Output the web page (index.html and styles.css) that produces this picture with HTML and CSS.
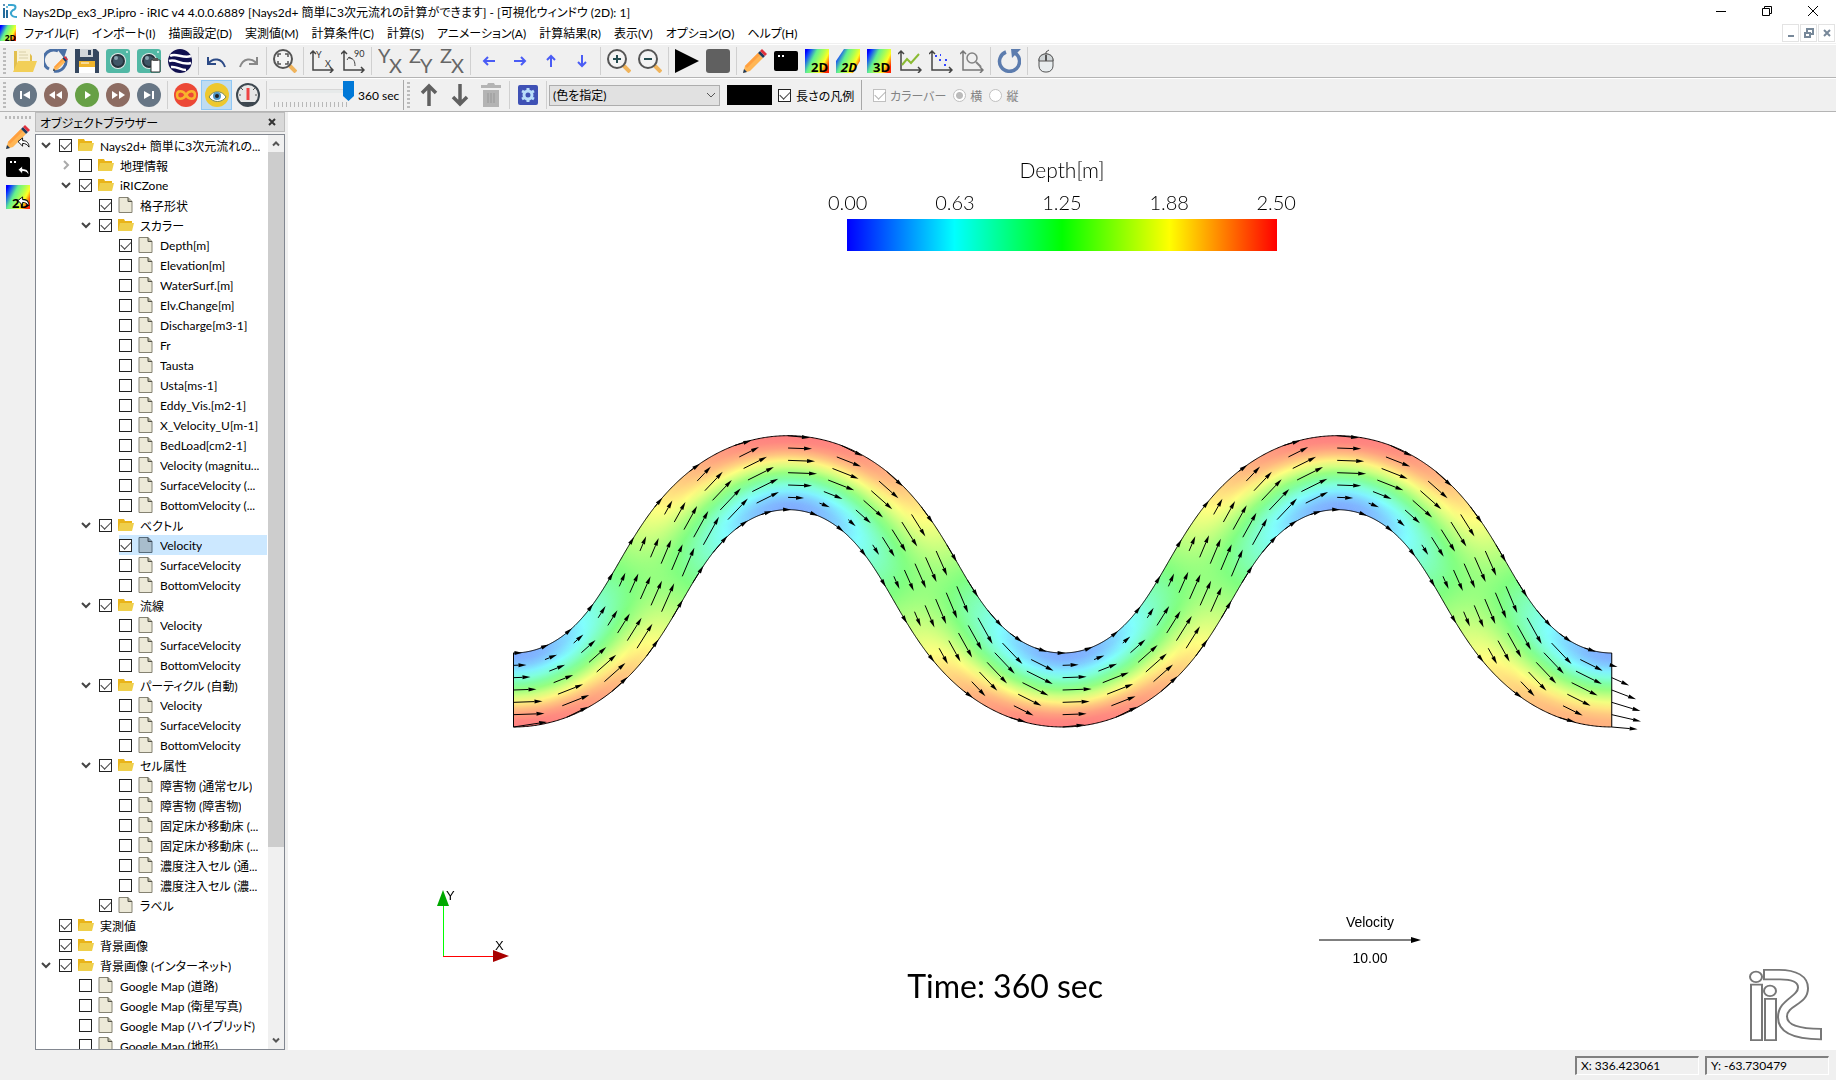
FILE: index.html
```html
<!DOCTYPE html>
<html lang="ja">
<head>
    <meta charset="UTF-8">
    <meta name="viewport" content="width=device-width, initial-scale=1.0">
    <title>Nays2Dp_ex3_JP.ipro - iRIC</title>
    <link rel="stylesheet" href="styles.css">
</head>
<body>
    <svg class="defs" aria-hidden="true">
        <defs>
            <linearGradient id="rainbow" x1="0" y1="0.2" x2="1" y2="0.7">
                <stop offset="0" stop-color="#00f"/>
                <stop offset="0.1" stop-color="#1040ff"/>
                <stop offset="0.35" stop-color="#60f090"/>
                <stop offset="0.6" stop-color="#b0ff50"/>
                <stop offset="0.78" stop-color="#ff2"/>
                <stop offset="1" stop-color="#f20"/>
            </linearGradient>
            <symbol id="folder" viewBox="0 0 16 16">
                <path d="M0 2l6 0 1 2h7v10H0z" fill="#e9b419"/>
                <path d="M2 6h14l-2 8H0z" fill="#efcf4b"/>
            </symbol>
            <symbol id="file" viewBox="0 0 16 16">
                <path d="M1 .5h9l4 4v11H1z" fill="#ece9d8" stroke="#858272"/>
                <path d="M10 .5v4h4" fill="#b8b5a0" stroke="#55544a"/>
            </symbol>
            <symbol id="pencil" viewBox="0 0 24 24">
                <path d="M0 24l2-7 13-13 5 5L7 22z" fill="#ffb655"/>
                <path d="M2 17l13-13 2 2L4 19z" fill="#ffa040"/>
                <path d="M15 4l2-2 5 5-2 2z" fill="#1c3a5e"/>
                <path d="M17 2l2-2 5 5-2 2z" fill="#e0303c"/>
                <path d="M0 24l1-4 3 3z" fill="#1c3a5e"/>
            </symbol>
            <symbol id="lens" viewBox="0 0 24 24">
                <path d="M16 16l7 7" stroke="#f0b45c" stroke-width="4"/>
                <circle cx="10" cy="10" r="9" fill="#f4f4f4" stroke="#555" stroke-width="2"/>
            </symbol>
            <symbol id="axes" viewBox="0 0 24 24">
                <path d="M3 2v19h20M0 5l3-3 3 3M20 18l3 3-3 3" fill="none" stroke="#444" stroke-width="1.500"/>
            </symbol>
            <symbol id="camera" viewBox="0 0 24 24">
                <rect width="24" height="24" rx="3" fill="#52b8a5"/>
                <circle cx="12" cy="12" r="8" fill="#e4ebea"/>
                <circle cx="12" cy="12" r="7" fill="#26323c"/>
                <circle cx="12" cy="12" r="5" fill="#3f5666"/>
                <circle cx="10" cy="9" r="2" fill="#8ba5b2"/>
                <circle cx="21" cy="3" r="1" fill="#d9f4ee"/>
            </symbol>
            <symbol id="reply" viewBox="0 0 14 12">
                <path d="M1 5l5-4v3c5 0 7 3 7 7-2-3-4-4-7-4v3z" fill="#fff" stroke="#000"/>
            </symbol>
        </defs>
    </svg>

    <header class="title-bar">
        <svg class="app-icon" viewBox="0 0 16 16">
            <path d="M2 5v10M5 7v8" stroke="#246c9c" stroke-width="2"/>
            <circle cx="2" cy="2" r="1" fill="#246c9c"/><circle cx="5" cy="4" r="1" fill="#39a5cf"/>
            <path d="M6 2h4c5 0 4 4 1 5-4 3-2 7 4 7" fill="none" stroke="#39a5cf" stroke-width="2"/>
        </svg>
        <h1>Nays2Dp_ex3_JP.ipro - iRIC v4 4.0.0.6889 [Nays2d+ 簡単に3次元流れの計算ができます] - [可視化ウィンドウ (2D): 1]</h1>
        <div class="window-buttons">
            <button type="button" aria-label="Minimize"><svg viewBox="0 0 12 12"><path d="M1 6.5h10"/></svg></button>
            <button type="button" aria-label="Restore"><svg viewBox="0 0 12 12"><path d="M1.500 3.500h7v7h-7zM3.500 3V1.500h7v7H9"/></svg></button>
            <button type="button" aria-label="Close"><svg viewBox="0 0 12 12"><path d="M1 1l10 10M11 1L1 11"/></svg></button>
        </div>
    </header>

    <nav class="menu-bar">
        <svg class="app-icon" viewBox="0 0 24 24"><rect width="24" height="24" fill="url(#rainbow)"/><text class="icon-2d" x="7" y="24">2D</text></svg>
        <button type="button">ファイル(F)</button>
        <button type="button">インポート(I)</button>
        <button type="button">描画設定(D)</button>
        <button type="button">実測値(M)</button>
        <button type="button">計算条件(C)</button>
        <button type="button">計算(S)</button>
        <button type="button">アニメーション(A)</button>
        <button type="button">計算結果(R)</button>
        <button type="button">表示(V)</button>
        <button type="button">オプション(O)</button>
        <button type="button">ヘルプ(H)</button>
        <div class="mdi-buttons">
            <button type="button" aria-label="Minimize view"><svg viewBox="0 0 10 10"><path d="M2 8h6"/></svg></button>
            <button type="button" aria-label="Restore view"><svg viewBox="0 0 10 10"><path d="M1 5h5v4H1zM3 4V1h6v5H7"/></svg></button>
            <button type="button" aria-label="Close view"><svg viewBox="0 0 10 10"><path d="M2 2l6 6M8 2L2 8"/></svg></button>
        </div>
    </nav>

    <div class="toolbar">
        <span class="grip"></span>
        <button type="button" aria-label="Open"><svg viewBox="0 0 24 24"><path d="M1 2h14l4 5v15H1z" fill="#e2bf4e"/><path d="M4 0h13v14H4z" fill="#f8f1d5"/><path d="M6 3h7M6 6h9M6 9h9" stroke="#d8cfa8"/><path d="M0 23l5-11h19l-4 11z" fill="#f2cf58"/></svg></button>
        <button type="button" aria-label="Reload"><svg viewBox="0 0 24 24"><path d="M14 2A10 10 0 0 0 5 20M10 22a10 10 0 0 0 11-14" fill="none" stroke="#4a6fa5" stroke-width="3"/><path d="M13 0h10l-3 9z" fill="#4a6fa5"/><use href="#pencil" x="9" y="6" width="15" height="17"/></svg></button>
        <button type="button" aria-label="Save"><svg viewBox="0 0 24 24"><path d="M0 0h21l3 3v21H0z" fill="#35475f"/><path d="M5 0h13v8H5z" fill="#d2d6da"/><path d="M13 1h3v5h-3z" fill="#35475f"/><path d="M4 12h16v12H4z" fill="#fff"/><path d="M4 12h16v6H4z" fill="#f0b52d"/><path d="M6 14h8" stroke="#fff"/></svg></button>
        <button type="button" aria-label="Snapshot"><svg><use href="#camera"/></svg></button>
        <button type="button" aria-label="Copy snapshot"><svg viewBox="0 0 24 24"><use href="#camera"/><path d="M14 11h9v12h-9z" fill="#fff" stroke="#333"/><path d="M16 9h5v3h-5z" fill="#555"/></svg></button>
        <button type="button" aria-label="Google Earth"><svg viewBox="0 0 24 24"><circle cx="12" cy="12" r="12" fill="#10104f"/><path d="M2 7c5-4 13 3 21 0M1 12c7-3 12 5 22 2M3 18c6-1 9 3 15 3" fill="none" stroke="#fff" stroke-width="2.500"/></svg></button>
        <span class="separator"></span>
        <button type="button" aria-label="Undo"><svg viewBox="0 0 24 24"><path d="M3 8v7h8M3 15c5-7 14-6 17 3" fill="none" stroke="#2c4a86" stroke-width="2"/></svg></button>
        <button type="button" aria-label="Redo"><svg viewBox="0 0 24 24"><path d="M21 8v7h-8M21 15c-5-7-14-6-17 3" fill="none" stroke="#888" stroke-width="2"/></svg></button>
        <span class="separator"></span>
        <button type="button" aria-label="Fit"><svg viewBox="0 0 24 24"><use href="#lens"/><path d="M5 8V5h3M12 5h3v3M15 12v3h-3M8 15H5v-3" fill="none" stroke="#555" stroke-width="1.500"/></svg></button>
        <span class="separator"></span>
        <button type="button" aria-label="Reset rotation"><svg viewBox="0 0 24 24"><use href="#axes"/><text class="icon-text" x="6" y="9">Y</text><text class="icon-text" x="15" y="18">X</text></svg></button>
        <button type="button" aria-label="Rotate 90"><svg viewBox="0 0 24 24"><use href="#axes"/><path d="M6 11l2-3 3 2M8 9c5 0 6 4 6 8" fill="none" stroke="#444"/><text class="icon-text" x="13" y="8">90</text></svg></button>
        <span class="separator"></span>
        <button type="button" aria-label="XY plane"><svg viewBox="0 0 24 24"><text class="icon-plane" x="0" y="14">Y</text><text class="icon-plane" x="11" y="24">X</text></svg></button>
        <button type="button" aria-label="YZ plane"><svg viewBox="0 0 24 24"><text class="icon-plane" x="0" y="14">Z</text><text class="icon-plane" x="11" y="24">Y</text></svg></button>
        <button type="button" aria-label="XZ plane"><svg viewBox="0 0 24 24"><text class="icon-plane" x="0" y="14">Z</text><text class="icon-plane" x="11" y="24">X</text></svg></button>
        <span class="separator"></span>
        <button type="button" aria-label="Left" class="move"><svg viewBox="0 0 24 24"><path d="M18 12H7M11 8l-4 4 4 4"/></svg></button>
        <button type="button" aria-label="Right" class="move"><svg viewBox="0 0 24 24"><path d="M6 12h11M13 8l4 4-4 4"/></svg></button>
        <button type="button" aria-label="Up" class="move"><svg viewBox="0 0 24 24"><path d="M12 18V7M8 11l4-4 4 4"/></svg></button>
        <button type="button" aria-label="Down" class="move"><svg viewBox="0 0 24 24"><path d="M12 6v11M8 13l4 4 4-4"/></svg></button>
        <span class="separator"></span>
        <button type="button" aria-label="Zoom in"><svg viewBox="0 0 24 24"><use href="#lens"/><path d="M6 10h8M10 6v8" stroke="#254c50" stroke-width="2"/></svg></button>
        <button type="button" aria-label="Zoom out"><svg viewBox="0 0 24 24"><use href="#lens"/><path d="M6 10h8" stroke="#254c50" stroke-width="2"/></svg></button>
        <span class="separator"></span>
        <button type="button" aria-label="Run"><svg viewBox="0 0 24 24"><path d="M0 0l24 12L0 24z"/></svg></button>
        <button type="button" aria-label="Stop"><svg viewBox="0 0 24 24"><rect width="24" height="24" rx="3" fill="#606060"/></svg></button>
        <span class="separator"></span>
        <button type="button" aria-label="Preprocessor"><svg><use href="#pencil"/></svg></button>
        <button type="button" aria-label="Solver console"><svg viewBox="0 0 24 24"><rect y="2" width="24" height="20" rx="2"/><path d="M4 7h2M8 7h2" stroke="#fff" stroke-width="2"/></svg></button>
        <button type="button" aria-label="2D window"><svg viewBox="0 0 24 24"><rect width="24" height="24" fill="url(#rainbow)"/><text class="icon-2d" x="6" y="23">2D</text></svg></button>
        <button type="button" aria-label="2D bird eye window"><svg viewBox="0 0 24 24"><path d="M8 0h16v12l-7 12H0V12z" fill="url(#rainbow)"/><text class="icon-2d italic" x="5" y="23">2D</text></svg></button>
        <button type="button" aria-label="3D window"><svg viewBox="0 0 24 24"><rect width="24" height="24" fill="url(#rainbow)"/><text class="icon-2d" x="6" y="23">3D</text></svg></button>
        <button type="button" aria-label="Graph"><svg viewBox="0 0 24 24"><use href="#axes"/><path d="M4 16l5-6 4 4 8-9" fill="none" stroke="#8aba33" stroke-width="2"/></svg></button>
        <button type="button" aria-label="Scatter chart"><svg viewBox="0 0 24 24"><use href="#axes"/><path d="M6 7h2M10 11h2M11 6h1M15 16h2M16 11h2" stroke="#34f" stroke-width="2"/></svg></button>
        <button type="button" aria-label="Verification"><svg viewBox="0 0 24 24" opacity="0.7"><use href="#axes"/><circle cx="12" cy="9" r="5" fill="none" stroke="#555" stroke-width="1.500"/><path d="M16 13l5 5" stroke="#555" stroke-width="2"/></svg></button>
        <span class="separator"></span>
        <button type="button" aria-label="Refresh"><svg viewBox="0 0 24 24"><path d="M9 3a10 10 0 1 0 9 1" fill="none" stroke="#5c7cae" stroke-width="3.500"/><path d="M14 0h10l-9 9z" fill="#5c7cae"/></svg></button>
        <span class="separator"></span>
        <button type="button" aria-label="Mouse hint"><svg viewBox="0 0 24 24"><path d="M12 6V3l3-2" fill="none" stroke="#555"/><rect x="5" y="5" width="14" height="18" rx="6" fill="#e8edef" stroke="#555"/><path d="M5 12V11c0-8 14-8 14 0v1z" fill="#cfd4d6" stroke="#555"/><path d="M12 6v6" stroke="#555" stroke-width="2"/></svg></button>
    </div>

    <div class="toolbar">
        <span class="grip"></span>
        <button type="button" aria-label="First"><svg viewBox="0 0 24 24"><circle cx="12" cy="12" r="12" fill="#677685"/><path d="M7 8h2v8H7zM17 8v8l-7-4z" fill="#fff"/></svg></button>
        <button type="button" aria-label="Backward"><svg viewBox="0 0 24 24"><circle cx="12" cy="12" r="12" fill="#8d6c62"/><path d="M11 8v8l-6-4zM18 8v8l-6-4z" fill="#fff"/></svg></button>
        <button type="button" aria-label="Play"><svg viewBox="0 0 24 24"><circle cx="12" cy="12" r="12" fill="#67a046"/><path d="M10 8v8l6-4z" fill="#fff"/></svg></button>
        <button type="button" aria-label="Forward"><svg viewBox="0 0 24 24"><circle cx="12" cy="12" r="12" fill="#8d6c62"/><path d="M6 8v8l6-4zM13 8v8l6-4z" fill="#fff"/></svg></button>
        <button type="button" aria-label="Last"><svg viewBox="0 0 24 24"><circle cx="12" cy="12" r="12" fill="#677685"/><path d="M15 8h2v8h-2zM7 8v8l7-4z" fill="#fff"/></svg></button>
        <span class="separator"></span>
        <button type="button" aria-label="Loop"><svg viewBox="0 0 24 24"><circle cx="12" cy="12" r="12" fill="#ec4836"/><path d="M12 12C9 7 3 7 3 12s6 5 9 0 9-5 9 0-6 5-9 0" fill="none" stroke="#f9b32c" stroke-width="2.500"/></svg></button>
        <button type="button" aria-label="Follow last step" class="active"><svg viewBox="0 0 24 24"><circle cx="12" cy="12" r="12" fill="#eec82e"/><path d="M4 14c4-7 13-7 17 0-4 6-13 6-17 0z" fill="#fff" stroke="#785"/><circle cx="12" cy="13" r="4" fill="#4d95c4"/><circle cx="12" cy="13" r="2" fill="#222"/></svg></button>
        <button type="button" aria-label="Speed"><svg viewBox="0 0 24 24"><circle cx="12" cy="12" r="11" fill="#e7e7e7" stroke="#3e4850" stroke-width="2"/><path d="M4 19h16a11 11 0 0 1-16 0z" fill="#3e4850"/><path d="M12 5v12" stroke="#e44" stroke-width="3"/><path d="M5 12H3M21 12h-2M7 7L5 5M17 7l2-2" stroke="#555"/></svg></button>
        <span class="separator"></span>
        <div class="time-slider">
            <input type="range" id="time" min="0" max="360" value="360">
            <span class="ticks"></span>
        </div>
        <label class="time-label" for="time">360 sec</label>
        <span class="edge"></span>
        <span class="grip"></span>
        <button type="button" aria-label="Move up"><svg viewBox="0 0 24 24"><path d="M12 23V4M5 10l7-7 7 7" fill="none" stroke="#606060" stroke-width="3.500"/></svg></button>
        <button type="button" aria-label="Move down"><svg viewBox="0 0 24 24"><path d="M12 1v19M5 14l7 7 7-7" fill="none" stroke="#606060" stroke-width="3.500"/></svg></button>
        <button type="button" aria-label="Delete"><svg viewBox="0 0 24 24" fill="#b4b4b4"><path d="M2 2h6l1-2h6l1 2h6v3H2zM4 7h16v17H4z"/><path d="M9 10v10M12 10v10M15 10v10" stroke="#989898"/></svg></button>
        <span class="separator"></span>
        <button type="button" aria-label="Settings"><svg viewBox="0 0 24 24"><rect x="2" y="2" width="20" height="20" rx="2" fill="#3f51b5"/><circle cx="12" cy="12" r="4" fill="none" stroke="#b9defa" stroke-width="3"/><path d="M12 5v3M12 16v3M6 8l2 1M16 15l2 1M18 8l-2 1M8 15l-2 1" stroke="#b9defa" stroke-width="3"/></svg></button>
        <span class="separator"></span>
        <span class="combo">
            <select aria-label="色"><option>(色を指定)</option></select>
            <svg viewBox="0 0 10 10"><path d="M1 3l4 4 4-4"/></svg>
        </span>
        <button type="button" aria-label="色の選択" class="color-chip"></button>
        <input type="checkbox" id="length-legend" checked>
        <label for="length-legend" class="wide-label">長さの凡例</label>
        <span class="edge"></span>
        <span class="disabled-group">
            <input type="checkbox" id="colorbar" checked disabled><label for="colorbar">カラーバー</label>
            <input type="radio" name="dir" id="horizontal" checked disabled><label for="horizontal">横</label>
            <input type="radio" name="dir" id="vertical" disabled><label for="vertical">縦</label>
        </span>
    </div>

    <main class="workspace">
        <div class="side-tools">
            <span class="grip-row"></span>
            <button type="button" aria-label="Back to preprocessor"><svg viewBox="0 0 24 24"><use href="#pencil"/><use href="#reply" x="11" y="12" width="13" height="11"/></svg></button>
            <button type="button" aria-label="Back to console"><svg viewBox="0 0 24 24"><rect y="2" width="24" height="20" rx="2"/><path d="M4 7h2M8 7h2" stroke="#fff" stroke-width="2"/><use href="#reply" x="11" y="10" width="13" height="11"/></svg></button>
            <button type="button" aria-label="Back to 2D window"><svg viewBox="0 0 24 24"><rect width="24" height="24" fill="url(#rainbow)"/><text class="icon-2d" x="6" y="23">2D</text><use href="#reply" x="11" y="11" width="13" height="11"/></svg></button>
        </div>

        <aside class="dock">
            <div class="dock-title">
                <h2>オブジェクトブラウザー</h2>
                <button type="button" aria-label="Close"><svg viewBox="0 0 8 8"><path d="M1 1l6 6M7 1L1 7"/></svg></button>
            </div>
            <div class="tree-frame">
                <ul class="tree" id="tree"></ul>
                <div class="scrollbar">
                    <svg viewBox="0 0 16 16"><path d="M5 10l3-3 3 3"/></svg>
                    <span class="thumb"></span>
                    <svg viewBox="0 0 16 16"><path d="M5 6l3 3 3-3"/></svg>
                </div>
            </div>
        </aside>

        <section class="view" id="view">
            <canvas id="field"></canvas>
            <div class="legend">
                <p class="legend-title">Depth[m]</p>
                <div class="legend-values"><span>0.00</span><span>0.63</span><span>1.25</span><span>1.88</span><span>2.50</span></div>
                <div class="legend-bar"></div>
            </div>
            <svg class="axis-mark" viewBox="0 0 80 80">
                <path d="M6.500 18v52" stroke="#0f0"/><path d="M6 70.500h52" stroke="#f00"/>
                <path d="M6 4l6 16H0z" fill="#00a800"/><path d="M72 70l-16-6v12z" fill="#a80000"/>
                <text x="9" y="14">Y</text><text x="58" y="64">X</text>
            </svg>
            <p class="time-text">Time: 360 sec</p>
            <div class="vector-legend">
                <span>Velocity</span>
                <svg viewBox="0 0 102 8"><path d="M0 4h96" stroke="#000"/><path d="M92 1l10 3-10 3z"/></svg>
                <span>10.00</span>
            </div>
            <svg class="logo" viewBox="0 0 74 84" preserveAspectRatio="none">
                <circle cx="7" cy="10" r="6"/><circle cx="21" cy="26" r="6"/>
                <path d="M2 19h11v63H2zM16 35h11v47H16z"/>
                <path d="M15 2h15c17 0 29 7 29 21 0 19-21 19-21 32 0 10 13 14 34 14v12C47 81 29 75 29 56c0-20 20-23 20-34 0-7-9-9-18-9H15z"/>
            </svg>
        </section>
    </main>

    <footer class="status-bar">
        <span class="coord">X: 336.423061</span>
        <span class="coord">Y: -63.730479</span>
    </footer>

    <script src="script.js"></script>
</body>
</html>
```
FILE: styles.css
```css
* {
    box-sizing: border-box;
}

body {
    margin: 0;
    height: 100vh;
    display: flex;
    flex-direction: column;
    overflow: hidden;
    background: #f0f0f0;
    color: #000;
    font-family: Lato, "Noto Sans CJK JP", sans-serif;
    font-size: 12px;
    font-feature-settings: "palt";
}

h1, h2, p, ul {
    margin: 0;
    padding: 0;
    font-size: 12px;
    font-weight: normal;
}

button {
    padding: 0;
    border: none;
    background: none;
    color: inherit;
    font: inherit;
}

svg {
    display: block;
}

.defs {
    position: absolute;
    width: 0;
    height: 0;
}

/* title and menu */
.title-bar, .menu-bar {
    display: flex;
    align-items: center;
    background: #fff;
    white-space: nowrap;
}

.title-bar {
    height: 22px;
    flex: none;
}

.title-bar .app-icon {
    width: 16px;
    height: 16px;
    margin: 0 5px 0 2px;
}

.window-buttons {
    display: flex;
    margin-left: auto;
}

.window-buttons button {
    width: 46px;
    height: 22px;
    display: grid;
    place-items: center;
}

.window-buttons svg {
    width: 12px;
    height: 12px;
    fill: none;
    stroke: #000;
}

.menu-bar {
    height: 22px;
    flex: none;
    gap: 13px;
    border-bottom: 1px solid #f0f0f0;
}

.menu-bar .app-icon {
    width: 16px;
    height: 16px;
    margin-right: -5px;
}

.mdi-buttons {
    display: flex;
    gap: 1px;
    margin-left: auto;
    margin-right: 1px;
}

.mdi-buttons button {
    width: 17px;
    height: 18px;
    display: grid;
    place-items: center;
    border: 1px solid #e3e3e3;
}

.mdi-buttons svg {
    width: 10px;
    height: 10px;
    fill: none;
    stroke: #778899;
    stroke-width: 2;
}

/* toolbars */
.toolbar {
    display: flex;
    align-items: center;
    flex: none;
    height: 34px;
    border-bottom: 1px solid #b4b4b4;
    border-top: 1px solid #fff;
}

.toolbar > button {
    width: 31px;
    height: 30px;
    display: grid;
    place-items: center;
    flex: none;
}

.toolbar > button svg {
    width: 24px;
    height: 24px;
}

.toolbar > .active {
    background: #bfdcf2;
    border: 1px solid #90c8f6;
}

.grip {
    width: 3px;
    height: 26px;
    margin: 0 3px;
    background: repeating-linear-gradient(#bbb 0 2px, transparent 2px 4px);
    flex: none;
}

.separator {
    width: 6px;
    height: 28px;
    flex: none;
    background: linear-gradient(#d0d0d0, #d0d0d0) 3px 0 / 1px 100% no-repeat;
}

.edge {
    width: 1px;
    height: 30px;
    background: #a8a8a8;
    flex: none;
}

.icon-text {
    font-size: 9px;
    fill: #333;
}

.icon-plane {
    font-size: 20px;
    fill: #666;
}

.icon-2d {
    font-family: "Open Sans", sans-serif;
    font-size: 13px;
    font-weight: bold;
}

.italic {
    font-style: italic;
}

.move path {
    fill: none;
    stroke: #4a5cf5;
    stroke-width: 2;
}

.time-slider {
    width: 85px;
    height: 28px;
    display: flex;
    flex-direction: column;
}

.time-slider input {
    appearance: none;
    width: 100%;
    height: 20px;
    margin: 0;
    border: none;
    background: linear-gradient(#d6d6d6, #d6d6d6) 0 8px / 100% 1px no-repeat,
        linear-gradient(#e7eaea, #e7eaea) 0 8px / 100% 4px no-repeat;
}

.time-slider input::-webkit-slider-thumb {
    appearance: none;
    width: 11px;
    height: 20px;
    background: #0078d7;
    clip-path: polygon(0 0, 100% 0, 100% 75%, 50% 100%, 0 75%);
}

.ticks {
    height: 5px;
    margin: 1px 5px 0;
    background: repeating-linear-gradient(90deg, #b8b8b8 0 1px, transparent 1px 4px);
}

.time-label {
    width: 49px;
    padding-left: 4px;
}

.combo {
    display: grid;
    width: 171px;
    height: 21px;
    margin-right: 7px;
}

.combo select, .combo svg {
    grid-area: 1 / 1;
}

.combo select {
    appearance: none;
    padding: 0 3px;
    border: 1px solid #adadad;
    border-radius: 0;
    background: #e1e1e1;
    font: inherit;
    color: #000;
}

.combo svg {
    width: 10px;
    height: 10px;
    place-self: center end;
    margin-right: 4px;
    fill: none;
    stroke: #555;
    pointer-events: none;
}

.toolbar > .color-chip {
    width: 45px;
    height: 20px;
    margin-right: 6px;
    background: #000;
}

input[type="checkbox"], input[type="radio"] {
    appearance: none;
    width: 13px;
    height: 13px;
    margin: 0;
    border: 1px solid #222;
    background: #fff;
    flex: none;
}

input[type="checkbox"]:checked::after {
    content: "";
    display: block;
    width: 9px;
    height: 5px;
    margin: 1px;
    border: solid #444;
    border-width: 0 0 1px 1px;
    transform: rotate(-45deg);
}

input[type="radio"] {
    border-radius: 50%;
}

input[type="radio"]:checked {
    background: radial-gradient(#bbb 0 3px, #fff 4px);
}

.wide-label {
    width: 70px;
    padding-left: 5px;
}

.disabled-group {
    display: flex;
    align-items: center;
    margin-left: 11px;
    color: #838383;
}

.disabled-group input {
    border-color: #c0c0c0;
}

.disabled-group input::after {
    opacity: 0.4;
}

.disabled-group label {
    padding: 0 7px 0 4px;
}

/* workspace */
.workspace {
    flex: 1;
    min-height: 0;
    display: flex;
}

.side-tools {
    width: 35px;
    flex: none;
    display: flex;
    flex-direction: column;
    align-items: center;
    gap: 6px;
}

.side-tools svg {
    width: 24px;
    height: 24px;
}

.grip-row {
    width: 26px;
    height: 3px;
    margin: 4px 0 0;
    background: repeating-linear-gradient(90deg, #bbb 0 2px, transparent 2px 4px);
}

.dock {
    width: 250px;
    flex: none;
    display: flex;
    flex-direction: column;
    gap: 2px;
    margin-right: 3px;
}

.dock-title {
    display: flex;
    align-items: center;
    justify-content: space-between;
    height: 20px;
    flex: none;
    padding: 0 8px 0 4px;
    background: #d9d9d9;
    border: 1px solid #bcbcbc;
}

.dock-title svg {
    width: 8px;
    height: 8px;
    stroke: #333;
    stroke-width: 2;
}

.tree-frame {
    flex: 1;
    min-height: 0;
    display: flex;
    border: 1px solid #828790;
    background: #fff;
}

.tree {
    flex: 1;
    min-width: 0;
    overflow: hidden;
    list-style: none;
}

.row {
    display: flex;
    align-items: center;
    height: 20px;
    margin-right: 1px;
}

.row .arrow {
    width: 10px;
    height: 10px;
    margin: 0 8px 0 5px;
    fill: none;
    stroke: #444;
    stroke-width: 2;
    flex: none;
}

.row .closed {
    stroke: #aaa;
    transform: rotate(-90deg);
}

.row .no-arrow {
    visibility: hidden;
}

.item {
    display: flex;
    align-items: center;
    min-width: 0;
    height: 20px;
    flex: 1;
    white-space: nowrap;
}

.item svg {
    width: 16px;
    height: 16px;
    margin: 0 6px;
    flex: none;
}

.item label {
    overflow: hidden;
    text-overflow: ellipsis;
}

.level-1 { padding-left: 20px; }
.level-2 { padding-left: 40px; }
.level-3 { padding-left: 60px; }

.selected .item {
    background: #cce8ff;
}

.selected .item svg {
    filter: hue-rotate(150deg) saturate(2) brightness(0.8);
}

.scrollbar {
    width: 16px;
    flex: none;
    display: flex;
    flex-direction: column;
    background: #f0f0f0;
}

.scrollbar svg {
    width: 16px;
    height: 17px;
    flex: none;
    fill: none;
    stroke: #555;
    stroke-width: 2;
}

.scrollbar .thumb {
    height: 76%;
    margin-bottom: auto;
    background: #cdcdcd;
}

/* drawing view, everything on it floats over the canvas */
.view {
    flex: 1;
    min-width: 0;
    position: relative;
    overflow: hidden;
    background: #fff;
}

#field {
    position: absolute;
    inset: 0;
    width: 100%;
    height: 100%;
}

.legend {
    position: absolute;
    top: 46px;
    left: 50%;
    width: 468px;
    margin-left: -234px;
    font-weight: 300;
    font-size: 20px;
    line-height: 24px;
}

.legend-title {
    font-size: 21px;
    font-weight: 300;
    text-align: center;
}

.legend-values {
    display: flex;
    justify-content: space-between;
    margin: 8px 0 5px;
}

.legend-bar {
    height: 32px;
    margin: 0 19px;
    background: linear-gradient(90deg, #00f, #0ff, #0f0, #ff0, #f00);
}

.axis-mark {
    position: absolute;
    left: 149px;
    bottom: 84px;
    width: 80px;
    height: 80px;
    font-family: "Liberation Sans", sans-serif;
    font-size: 13px;
}

.time-text {
    position: absolute;
    left: 40%;
    bottom: 46px;
    font-size: 32px;
    line-height: 36px;
}

.vector-legend {
    position: absolute;
    right: 415px;
    bottom: 83px;
    width: 102px;
    display: flex;
    flex-direction: column;
    align-items: center;
    gap: 5px;
    font-family: "Liberation Sans", sans-serif;
    font-size: 14px;
    line-height: 18px;
}

.vector-legend svg {
    width: 102px;
    height: 8px;
}

.logo {
    position: absolute;
    right: 13px;
    bottom: 8px;
    width: 74px;
    height: 74px;
    fill: none;
    stroke: #777;
    stroke-width: 2;
}

.status-bar {
    display: flex;
    justify-content: flex-end;
    gap: 6px;
    flex: none;
    height: 30px;
    padding: 6px 7px;
}

.coord {
    width: 124px;
    height: 19px;
    padding-left: 4px;
    border: 1px solid #fff;
    border-top: 2px solid #808080;
    border-left: 2px solid #808080;
    line-height: 16px;
}
```
FILE: script.js
```js
// [level, state of the arrow, checked, folder, text]
const vectors = ['Velocity', 'SurfaceVelocity', 'BottomVelocity'];
const items = [
    [0, 'open', 1, 1, 'Nays2d+ 簡単に3次元流れの...'],
    [1, 'closed', 0, 1, '地理情報'],
    [1, 'open', 1, 1, 'iRICZone'],
    [2, '', 1, 0, '格子形状'],
    [2, 'open', 1, 1, 'スカラー'],
    [3, '', 1, 0, 'Depth[m]'],
    ...['Elevation[m]', 'WaterSurf.[m]', 'Elv.Change[m]', 'Discharge[m3-1]', 'Fr', 'Tausta',
        'Usta[ms-1]', 'Eddy_Vis.[m2-1]', 'X_Velocity_U[m-1]', 'BedLoad[cm2-1]',
        'Velocity (magnitu...', 'SurfaceVelocity (...', 'BottomVelocity (...'].map(t => [3, '', 0, 0, t]),
    [2, 'open', 1, 1, 'ベクトル'],
    [3, '', 1, 0, 'Velocity', 'selected'],
    [3, '', 0, 0, 'SurfaceVelocity'],
    [3, '', 0, 0, 'BottomVelocity'],
    [2, 'open', 1, 1, '流線'],
    ...vectors.map(t => [3, '', 0, 0, t]),
    [2, 'open', 1, 1, 'パーティクル (自動)'],
    ...vectors.map(t => [3, '', 0, 0, t]),
    [2, 'open', 1, 1, 'セル属性'],
    ...['障害物 (通常セル)', '障害物 (障害物)', '固定床か移動床 (...', '固定床か移動床 (...',
        '濃度注入セル (通...', '濃度注入セル (濃...'].map(t => [3, '', 0, 0, t]),
    [2, '', 1, 0, 'ラベル'],
    [0, '', 1, 1, '実測値'],
    [0, '', 1, 1, '背景画像'],
    [0, 'open', 1, 1, '背景画像 (インターネット)'],
    ...['道路', '衛星写真', 'ハイブリッド', '地形'].map(t => [1, '', 0, 0, 'Google Map (' + t + ')'])
];

document.getElementById('tree').innerHTML = items.map(([level, arrow, checked, folder, text, cls], i) => `
    <li class="row level-${level} ${cls || ''}">
        <svg class="arrow ${arrow || 'no-arrow'}" viewBox="0 0 10 10"><path d="M1 3l4 4 4-4"/></svg>
        <span class="item">
            <input type="checkbox" id="item-${i}" ${checked ? 'checked' : ''}>
            <svg><use href="#${folder ? 'folder' : 'file'}"/></svg>
            <label for="item-${i}">${text}</label>
        </span>
    </li>`).join('');

// meandering channel: sine-generated curve, 9 stations per half wave
const WAVE = 738;
const WIDTH = 74;
const STATION = WAVE / 18;
const LAG = [2, 1, 3, 6, 7, 8, 9, 8, 6];

// arrow lengths from the inner bank to the outer bank
const INLET = [
    [9, 13, 17, 23, 29, 31, 34], [9, 13, 17, 21, 27, 29, 24], [8, 13, 19, 23, 26, 28, 21],
    [8, 14, 18, 23, 27, 29, 20], [9, 15, 21, 25, 27, 31, 21], [9, 16, 21, 26, 28, 31, 20],
    [12, 16, 23, 27, 30, 32, 22], [13, 20, 26, 28, 30, 29, 15], [17, 22, 26, 29, 29, 25, 12]
];
const BEND = [
    [3, 16, 24, 29, 27, 24, 22], [3, 11, 20, 28, 28, 26, 24], [4, 10, 20, 26, 28, 26, 22],
    [5, 12, 23, 26, 29, 26, 20], [5, 14, 23, 27, 27, 27, 20], [6, 16, 24, 27, 28, 29, 20],
    [8, 18, 24, 28, 28, 30, 22], [11, 20, 26, 29, 29, 29, 15], [17, 22, 26, 29, 29, 25, 12]
];
const OUTLET = [[0, 0], [6, -15], [19, -24], [26, -21], [30, -17], [30, -13], [26, -5]];

function angleAt(s) {
    return Math.PI / 3 * Math.sin(2 * Math.PI * s / WAVE);
}

function centerLine() {
    const pts = [];
    let x = 0, y = 0;
    for (let s = 0; s <= WAVE * 2; s++) {
        const a = angleAt(s);
        pts.push({ x, y, a });
        const mid = angleAt(s + 0.5);
        x += Math.cos(mid);
        y -= Math.sin(mid);
    }
    return pts;
}

function color(depth) {
    const stops = [[0, 0, 255], [0, 255, 255], [0, 255, 0], [255, 255, 0], [255, 0, 0]];
    const v = Math.max(0, Math.min(3.999, depth / 2.5 * 4));
    const i = Math.floor(v);
    const rgb = stops[i].map((c, n) => Math.round((c + (stops[i + 1][n] - c) * (v - i) + 255) / 2));
    return `rgb(${rgb})`;
}

function drawArrow(ctx, x, y, len, a) {
    if (!len) return;
    const ex = x + len * Math.cos(a), ey = y - len * Math.sin(a);
    const head = 8, w = 2;
    const bx = ex - head * Math.cos(a), by = ey + head * Math.sin(a);
    if (len > head) {
        ctx.beginPath();
        ctx.moveTo(x, y);
        ctx.lineTo(bx, by);
        ctx.stroke();
    }
    ctx.beginPath();
    ctx.moveTo(ex, ey);
    ctx.lineTo(bx + w * Math.sin(a), by + w * Math.cos(a));
    ctx.lineTo(bx - w * Math.sin(a), by - w * Math.cos(a));
    ctx.closePath();
    ctx.fill();
}

function draw() {
    const canvas = document.getElementById('field');
    const w = canvas.width = canvas.clientWidth;
    const h = canvas.height = canvas.clientHeight;
    const ctx = canvas.getContext('2d');
    const pts = centerLine();
    const last = pts[pts.length - 1];
    ctx.translate(Math.ceil((w - last.x) / 2) + 0.5, Math.round(h / 2 + 109));

    const at = (p, off) => [p.x + off * Math.sin(p.a), p.y + off * Math.cos(p.a)];
    const half = WIDTH / 2;

    for (let i = 0; i < pts.length - 1; i++) {
        const p = pts[i], q = pts[Math.min(i + 2, pts.length - 1)];
        const a = at(p, -half), b = at(p, half), c = at(q, half), d = at(q, -half);
        const grad = ctx.createLinearGradient(...a, ...b);
        const bend = Math.cos(2 * Math.PI * (i - 5) / WAVE);
        for (let n = 0; n <= 12; n++) {
            const side = Math.sin((n / 6 - 1) * Math.PI / 2) * bend;
            // the bed is shallower on the outer side of the outlet
            const gain = i > WAVE * 1.75 && side > 0 ? 1.15 - (i / WAVE - 1.75) : 1.15;
            grad.addColorStop(n / 12, color(1.36 + gain * side));
        }
        ctx.fillStyle = grad;
        ctx.beginPath();
        ctx.moveTo(...a);
        ctx.lineTo(...b);
        ctx.lineTo(...c);
        ctx.lineTo(...d);
        ctx.fill();
    }

    ctx.fillStyle = ctx.strokeStyle = '#000';
    ctx.lineWidth = 1;
    ctx.beginPath();
    pts.forEach(p => ctx.lineTo(...at(p, -half)));
    pts.slice().reverse().forEach(p => ctx.lineTo(...at(p, half)));
    ctx.closePath();
    ctx.stroke();

    for (let k = 0; k <= 36; k++) {
        const p = pts[Math.round(k * STATION)];
        const turn = Math.floor(k / 9), m = k % 9;
        const sign = turn % 2 ? -1 : 1;
        for (let j = 0; j < 7; j++) {
            const [x, y] = at(p, (j - 3) * WIDTH / 6);
            let len = (turn ? BEND : INLET)[m][sign > 0 ? j : 6 - j];
            let a = p.a + sign * LAG[m] * Math.PI / 180;
            if (j === 0 || j === 6) a = angleAt(k * STATION + len / 2);
            if (k === 36) {
                len = OUTLET[j][0];
                a = OUTLET[j][1] * Math.PI / 180;
            }
            drawArrow(ctx, x, y, len, a);
        }
    }
}

draw();
window.addEventListener('resize', draw);
```
